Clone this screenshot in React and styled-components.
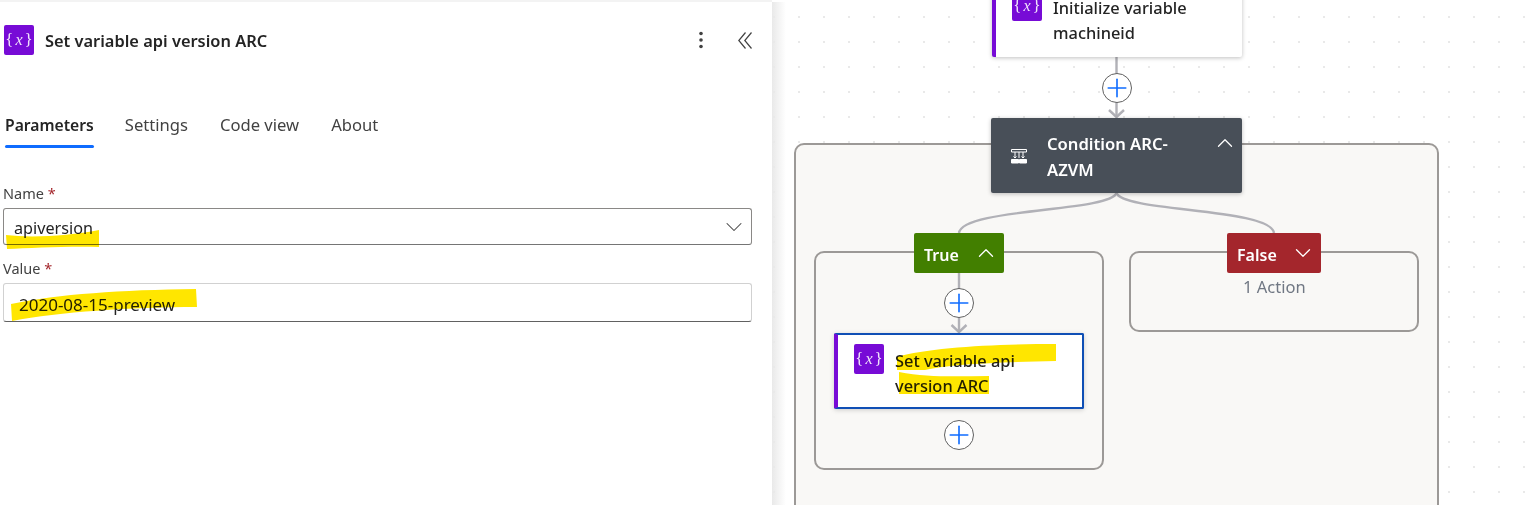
import React from 'react';
import styled, { createGlobalStyle } from 'styled-components';
import { ChevronDown, ChevronUp, Plus } from 'lucide-react';

const Global = createGlobalStyle`
  html, body { margin: 0; padding: 0; overflow: hidden; background: #fff; }
  body { font-family: "Noto Sans", "Open Sans", "Liberation Sans", sans-serif; color: #242424; }
`;

const Page = styled.div`
  position: relative;
  display: flex;
  width: 1537px;
  height: 505px;
  overflow: hidden;
`;

const Panel = styled.aside`
  position: relative;
  z-index: 2;
  flex: 0 0 772px;
  box-sizing: border-box;
  padding: 25px 20px 0 3px;
  background: #fff;
  border-top: 2px solid #f3f3f3;
`;

const PanelShadow = styled.div`
  position: absolute;
  top: 0;
  bottom: 0;
  right: -14px;
  width: 14px;
  background: linear-gradient(to right, #e9e9e9, rgba(255, 255, 255, 0));
`;

const Header = styled.header`
  display: flex;
  align-items: center;
  height: 30px;
  margin-top: -2px;
  padding-left: 1px;
`;

const Title = styled.h1`
  flex: 1;
  margin: 2px 0 0 11px;
  font-size: 16.4px;
  font-weight: 600;
  line-height: 30px;
`;

const HeaderAction = styled.svg`
  flex: none;
  margin-right: ${(p) => p.$gap}px;
  color: #424242;
`;

const VarIcon = styled.span`
  flex: 0 0 auto;
  display: flex;
  align-items: center;
  justify-content: center;
  width: 30px;
  height: 30px;
  border-radius: 2px;
  background: #770bd6;
  color: #f0e2fb;
  font: 17px "Liberation Serif", serif;
  white-space: nowrap;
  i { font-size: 16px; margin: 0 2px; }
`;

const Tabs = styled.nav`
  display: flex;
  margin-top: 58px;
  padding-left: 2px;
`;

const Tab = styled.span`
  position: relative;
  margin-right: ${(p) => p.$gap}px;
  font-size: ${(p) => (p.$active ? 15.7 : 16.6)}px;
  line-height: 24px;
  color: ${(p) => (p.$active ? '#242424' : '#424242')};
  font-weight: ${(p) => (p.$active ? 600 : 400)};
  &::after {
    content: '';
    display: ${(p) => (p.$active ? 'block' : 'none')};
    position: absolute;
    left: 0;
    right: 0;
    bottom: -11px;
    height: 3px;
    border-radius: 2px;
    background: #0f6cff;
  }
`;

const FieldLabel = styled.label`
  display: block;
  margin-top: ${(p) => p.$top}px;
  font-size: 14.5px;
  line-height: 20px;
  color: #424242;
  b { font-weight: 400; color: #a4262c; }
`;

const InputBox = styled.div`
  display: flex;
  align-items: center;
  justify-content: space-between;
  box-sizing: border-box;
  height: ${(p) => p.$height}px;
  margin-top: ${(p) => p.$top}px;
  padding: 0 3px 0 ${(p) => p.$pad}px;
  border: 1px solid ${(p) => p.$border};
  border-bottom-color: ${(p) => p.$bottom};
  border-radius: 3px;
  font-size: ${(p) => p.$size}px;
  color: #242424;
`;

const InputText = styled.span`
  margin-top: 3px;
`;

const Canvas = styled.main`
  position: relative;
  flex: 1;
  overflow: hidden;
  background-color: #fff;
  background-image: radial-gradient(circle, #a8a8a8 0.8px, transparent 1px);
  background-size: 25px 25px;
  background-position: -10.5px 4.5px;
`;

const Scope = styled.div`
  position: absolute;
  left: ${(p) => p.$x}px;
  top: ${(p) => p.$y}px;
  width: ${(p) => p.$w}px;
  height: ${(p) => p.$h}px;
  box-sizing: border-box;
  border: 2px solid #9c9997;
  border-radius: 10px;
  background: #f9f8f6;
`;

const Edges = styled.svg`
  position: absolute;
  left: 0;
  top: 0;
`;

const Card = styled.div`
  position: absolute;
  left: ${(p) => p.$x}px;
  top: ${(p) => p.$y}px;
  width: ${(p) => p.$w}px;
  height: ${(p) => p.$h}px;
  box-sizing: border-box;
  display: flex;
  align-items: flex-start;
  gap: 11px;
  padding: ${(p) => p.$pad}px 12px 0 16px;
  background: #fff;
  border-left: 4px solid #770bd6;
  border-radius: 2px;
  box-shadow: 0 1px 4px rgba(0, 0, 0, 0.25);
  font-size: 16.4px;
  font-weight: 500;
  line-height: 25px;
  color: #242424;
  ${(p) => p.$selected && `
    border: 2px solid #0f4fb5;
    border-left: 4px solid #770bd6;
    box-shadow: 0 1px 5px rgba(0, 0, 0, 0.18);
  `}
`;

const CardText = styled.span`
  margin-top: 4px;
`;

const ConditionNode = styled.div`
  position: absolute;
  left: ${(p) => p.$x}px;
  top: ${(p) => p.$y}px;
  width: 251px;
  height: 75px;
  box-sizing: border-box;
  display: flex;
  align-items: center;
  padding: 0 4px 0 20px;
  border-radius: 2px;
  background: #484f58;
  color: #fff;
  font-size: 16.6px;
  font-weight: 600;
  line-height: 26px;
  box-shadow: 0 1px 4px rgba(0, 0, 0, 0.25);
`;

const ConditionText = styled.span`
  flex: 1;
  margin: 2px 0 0 20px;
`;

const CollapseIcon = styled.span`
  display: flex;
  align-self: flex-start;
  margin-top: ${(p) => p.$top}px;
`;

const BranchHeader = styled.div`
  position: absolute;
  left: ${(p) => p.$x}px;
  top: 233px;
  width: ${(p) => p.$w}px;
  height: 40px;
  box-sizing: border-box;
  display: flex;
  align-items: center;
  justify-content: space-between;
  padding: 3px 5px 0 10px;
  border-radius: 2px;
  background: ${(p) => p.$bg};
  color: #fff;
  font-size: 16px;
  font-weight: 600;
  svg { margin-top: -4px; }
`;

const CountLabel = styled.span`
  position: absolute;
  left: ${(p) => p.$x}px;
  top: ${(p) => p.$y}px;
  font-size: 16.5px;
  line-height: 22px;
  color: #707783;
`;

const AddButton = styled.span`
  position: absolute;
  left: ${(p) => p.$x - 15}px;
  top: ${(p) => p.$y - 15}px;
  width: 30px;
  height: 30px;
  box-sizing: border-box;
  display: flex;
  align-items: center;
  justify-content: center;
  border: 1px solid #616161;
  border-radius: 50%;
  background: #fff;
  color: #0f6cff;
  svg { flex: none; }
`;

const Marker = styled.svg`
  position: absolute;
  left: 0;
  top: 0;
  z-index: 3;
  mix-blend-mode: multiply;
  pointer-events: none;
`;

const VarGlyph = () => (
  <VarIcon>{'{'}<i>x</i>{'}'}</VarIcon>
);

const ConditionGlyph = () => (
  <svg width="16" height="16" viewBox="0 0 16 16" fill="none" stroke="#fff" strokeWidth="1">
    <path d="M0.500 1.500h15M0.500 1.500v2.500M15.500 1.500v2.500M0.500 4h15M4 4v6M12 4v6M8 4v6" />
    <path d="M2.500 8.500L4 10l1.500-1.500M10.500 8.500L12 10l1.500-1.500" />
    <path d="M0.500 11.500h7v3.500h-7zM8.500 11.500h7v3.500h-7z" fill="#fff" />
  </svg>
);

const Add = ({ x, y }) => (
  <AddButton $x={x} $y={y}>
    <Plus size={30} strokeWidth={1.3} />
  </AddButton>
);

const App = () => (
  <Page>
    <Global />
    <Panel>
      <Header>
        <VarGlyph />
        <Title>Set variable api version ARC</Title>
        <HeaderAction as="svg" $gap={34} width="6" height="18" viewBox="0 0 6 18" fill="currentColor">
          <circle cx="3" cy="2.500" r="1.800" />
          <circle cx="3" cy="9" r="1.800" />
          <circle cx="3" cy="15.500" r="1.800" />
        </HeaderAction>
        <HeaderAction as="svg" $gap={0} width="14" height="17" viewBox="0 0 14 17" fill="none" stroke="currentColor" strokeWidth="1.2">
          <path d="M7.500 0.500L0.800 8.500l6.700 8M13.500 0.500L6.800 8.500l6.700 8" />
        </HeaderAction>
      </Header>
      <Tabs>
        <Tab $active $gap={31}>Parameters</Tab>
        <Tab $gap={32}>Settings</Tab>
        <Tab $gap={32}>Code view</Tab>
        <Tab>About</Tab>
      </Tabs>
      <FieldLabel $top={46}>Name <b>*</b></FieldLabel>
      <InputBox $height={37} $top={5} $pad={10} $size={16.2} $border="#8a8886" $bottom="#757575">
        <InputText>apiversion</InputText>
        <ChevronDown size={28} strokeWidth={0.9} color="#424242" />
      </InputBox>
      <FieldLabel $top={13}>Value <b>*</b></FieldLabel>
      <InputBox $height={39} $top={5} $pad={15} $size={17} $border="#d1d1d1" $bottom="#616161">
        <InputText>2020-08-15-preview</InputText>
      </InputBox>
      <PanelShadow />
    </Panel>
    <Canvas>
      <Scope $x={22} $y={143} $w={645} $h={420} />
      <Scope $x={42} $y={251} $w={290} $h={219} />
      <Scope $x={357} $y={251} $w={290} $h={81} />
      <Edges width="765" height="505" fill="none" stroke="#b1b1b7" strokeWidth="2.4">
        <path d="M344.500 57V116" />
        <path d="M337 110l7.500 7 7.500-7" />
        <path d="M344.500 193C338 212 190 208 187 233" />
        <path d="M344.500 193C351 212 499 208 502 233" />
        <path d="M187 273V332" />
        <path d="M179.500 325l7.500 7 7.500-7" />
      </Edges>
      <Card $x={220} $y={-24} $w={250} $h={81} $pad={15}>
        <VarGlyph />
        <CardText>Initialize variable machineid</CardText>
      </Card>
      <Add x={344.500} y={88} />
      <ConditionNode $x={219} $y={118}>
        <ConditionGlyph />
        <ConditionText>Condition ARC-AZVM</ConditionText>
        <CollapseIcon $top={12}><ChevronUp size={26} strokeWidth={1.2} /></CollapseIcon>
      </ConditionNode>
      <BranchHeader $x={142} $w={90} $bg="#427f00">
        True
        <ChevronUp size={26} strokeWidth={1.2} />
      </BranchHeader>
      <BranchHeader $x={455} $w={94} $bg="#a4262c">
        False
        <ChevronDown size={26} strokeWidth={1.2} />
      </BranchHeader>
      <CountLabel $x={471} $y={276}>1 Action</CountLabel>
      <Add x={187} y={303} />
      <Card $selected $x={62} $y={333} $w={250} $h={76} $pad={9}>
        <VarGlyph />
        <CardText>Set variable api version ARC</CardText>
      </Card>
      <Add x={187} y={435} />
    </Canvas>
    <Marker width="1537" height="505" fill="#ffe600">
      <path d="M6 235C30 238 70 236 99 230L99 247C70 246 30 248 7 249Z" />
      <path d="M11 304C60 294 120 290 196 289L197 307C130 307 60 312 12 321Z" />
      <path d="M897 357C930 347 1000 344 1056 344L1056 361C1000 362 950 364 925 370L897 370Z" />
      <path d="M899 372C930 378 960 376 989 376L989 394L899 394Z" />
    </Marker>
  </Page>
);

export default App;
